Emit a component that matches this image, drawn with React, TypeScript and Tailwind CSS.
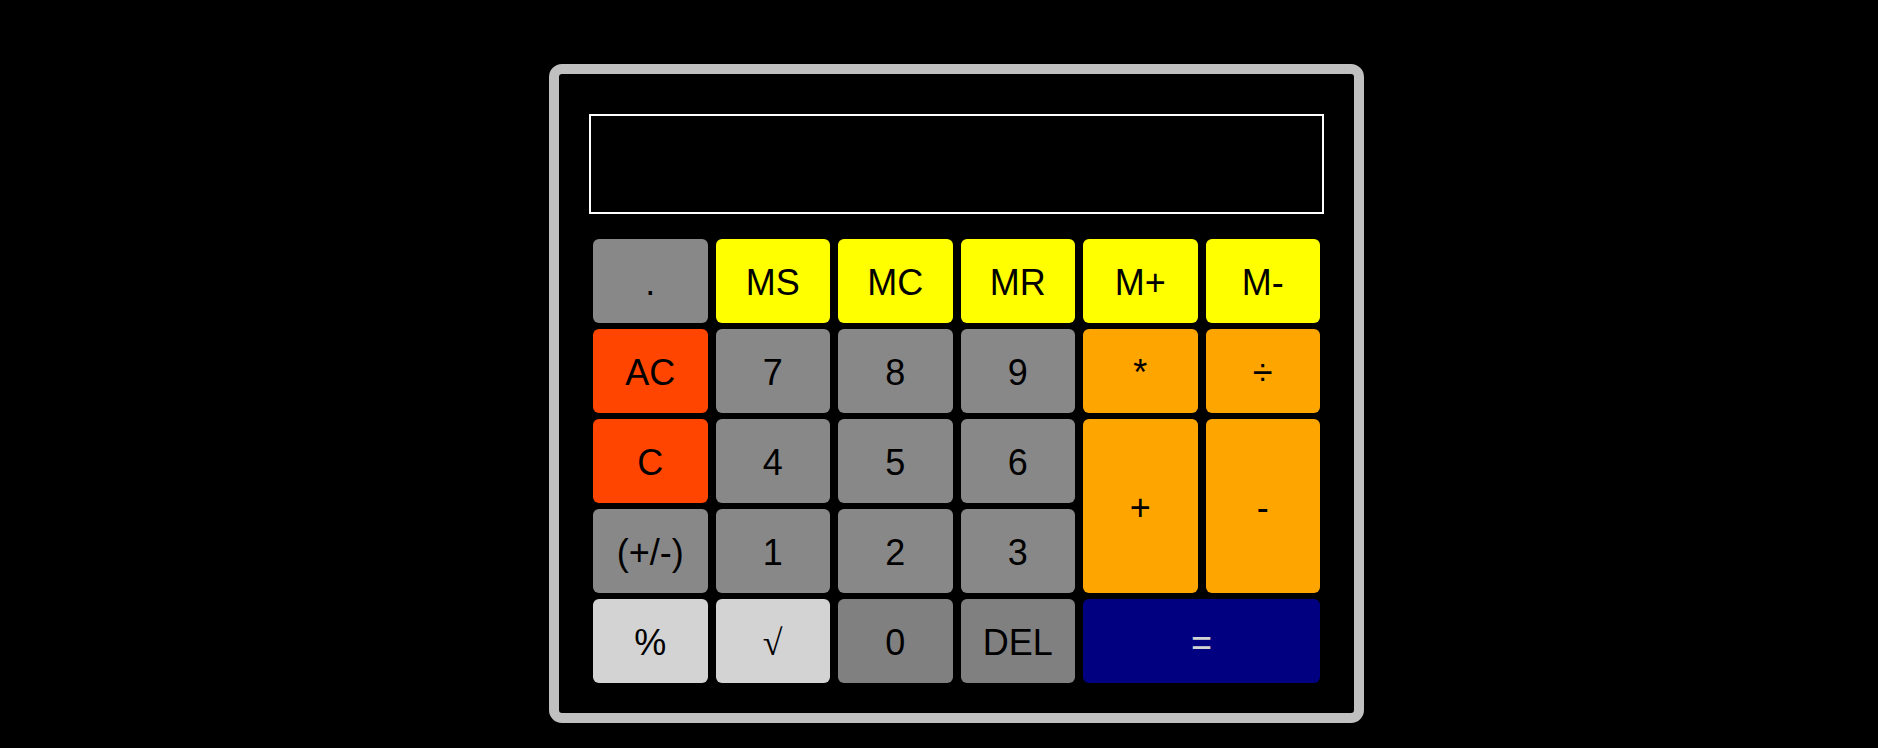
const keys = [
  { label: ".", cls: "bg-[#888888] text-black" },
  { label: "MS", cls: "bg-[#ffff00] text-black" },
  { label: "MC", cls: "bg-[#ffff00] text-black" },
  { label: "MR", cls: "bg-[#ffff00] text-black" },
  { label: "M+", cls: "bg-[#ffff00] text-black" },
  { label: "M-", cls: "bg-[#ffff00] text-black" },
  { label: "AC", cls: "bg-[#ff4500] text-black" },
  { label: "7", cls: "bg-[#888888] text-black" },
  { label: "8", cls: "bg-[#888888] text-black" },
  { label: "9", cls: "bg-[#888888] text-black" },
  { label: "*", cls: "bg-[#ffa500] text-black" },
  { label: "÷", cls: "bg-[#ffa500] text-black" },
  { label: "C", cls: "bg-[#ff4500] text-black" },
  { label: "4", cls: "bg-[#888888] text-black" },
  { label: "5", cls: "bg-[#888888] text-black" },
  { label: "6", cls: "bg-[#888888] text-black" },
  { label: "+", cls: "row-span-2 bg-[#ffa500] text-black" },
  { label: "-", cls: "row-span-2 bg-[#ffa500] text-black" },
  { label: "(+/-)", cls: "bg-[#888888] text-black" },
  { label: "1", cls: "bg-[#888888] text-black" },
  { label: "2", cls: "bg-[#888888] text-black" },
  { label: "3", cls: "bg-[#888888] text-black" },
  { label: "%", cls: "bg-[#d3d3d3] text-black" },
  { label: "√", cls: "bg-[#d3d3d3] text-black font-['Liberation_Serif',serif]" },
  { label: "0", cls: "bg-[#808080] text-black" },
  { label: "DEL", cls: "bg-[#808080] text-black" },
  { label: "=", cls: "col-span-2 bg-[#000080] text-[#d3d3d3]" },
]

export default function App() {
  return (
    <div className="min-h-screen bg-black pt-[64px] pl-[549px] font-['Liberation_Sans',Arial,sans-serif]">
      <div className="w-[815px] rounded-[13px] border-[10px] border-[#c0c0c0] px-[30px] pt-[40px] pb-[30px]">
        <div className="h-[100px] border-2 border-white bg-black" />
        <div className="mx-1 mt-[25px] grid grid-cols-6 auto-rows-[84px] gap-x-2 gap-y-1.5">
          {keys.map((k) => (
            <button
              key={k.label}
              className={`flex items-center justify-center rounded-md pt-1 text-[36px] leading-none ${k.cls}`}
            >
              {k.label}
            </button>
          ))}
        </div>
      </div>
    </div>
  )
}
